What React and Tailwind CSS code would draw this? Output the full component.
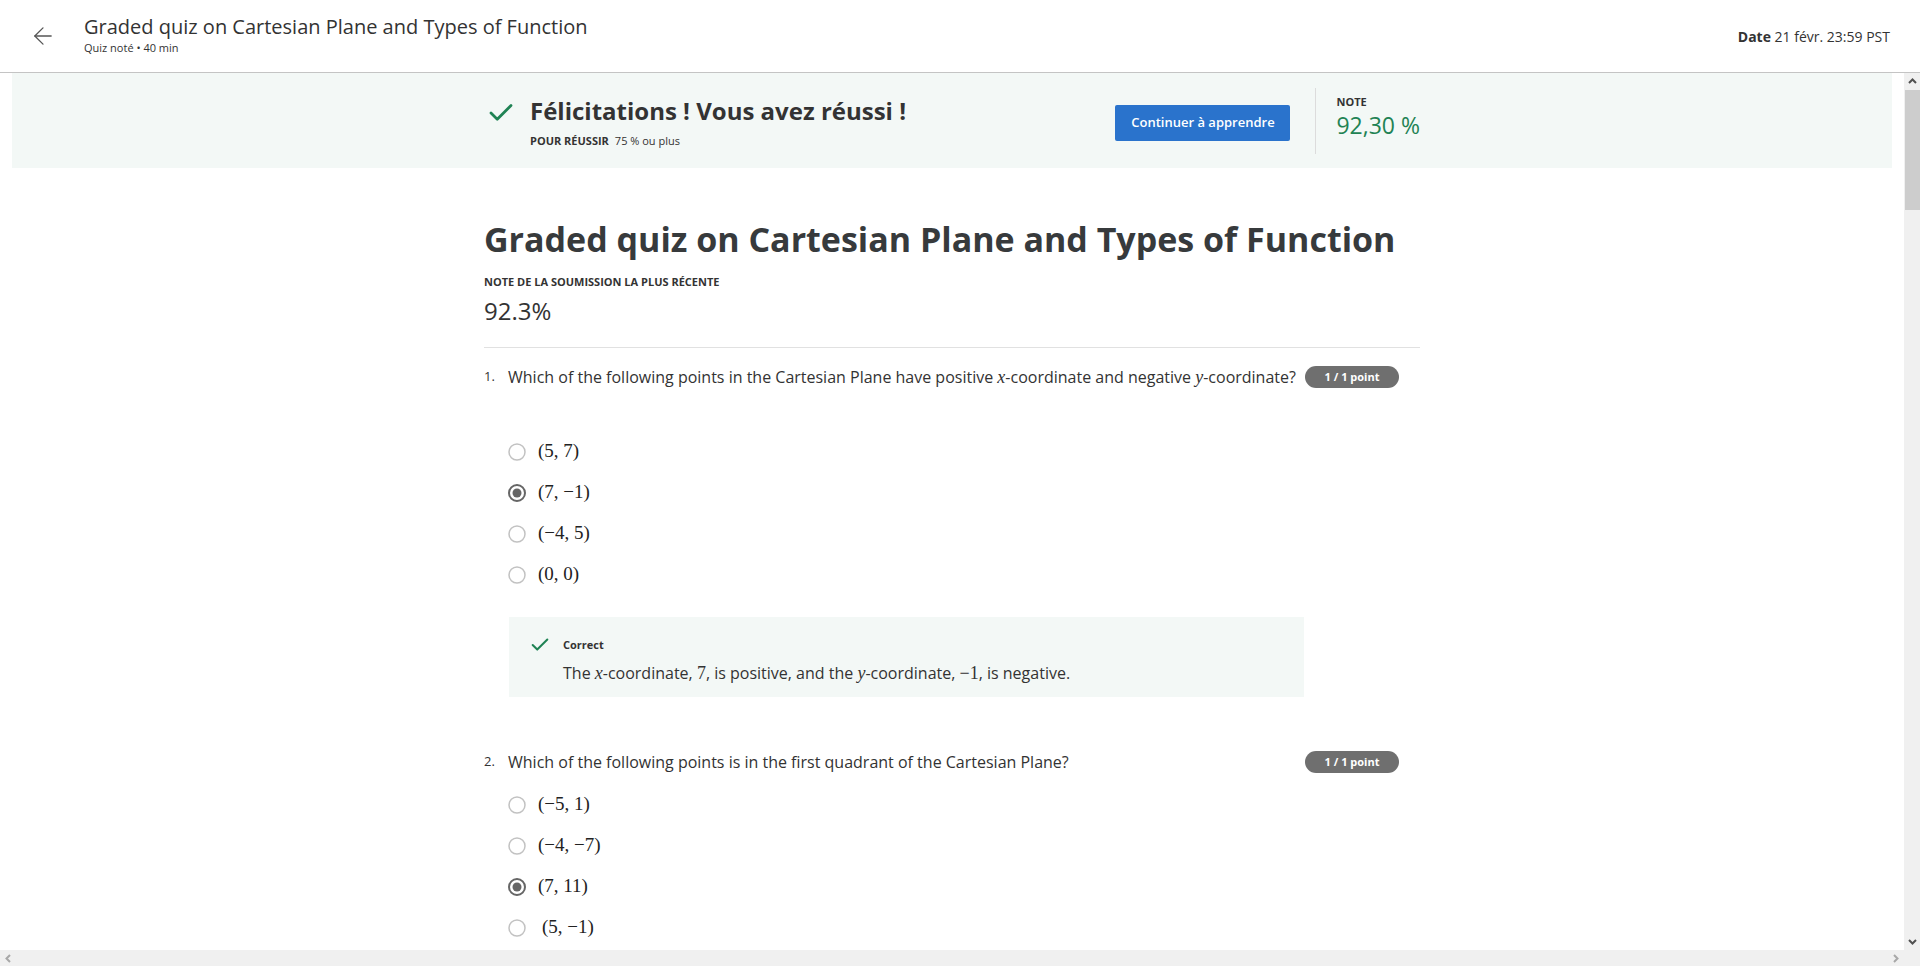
import { ArrowLeft, Check } from 'lucide-react';

const M = ({ children, italic }) => (
  <span className={`font-['Liberation_Serif',serif] text-[18px] ${italic ? 'italic' : ''}`}>{children}</span>
);

const Radio = ({ checked }) => (
  <svg width="18" height="18" viewBox="0 0 18 18" className="shrink-0">
    <circle cx="9" cy="9" r="8" fill="white" stroke={checked ? '#666666' : '#c2c2c2'} strokeWidth={checked ? 2 : 1.5} />
    {checked && <circle cx="9" cy="9" r="4.5" fill="#666666" />}
  </svg>
);

const Option = ({ label, checked, extra = '' }) => (
  <div className="flex items-center h-[41px]">
    <Radio checked={checked} />
    <span className={`ml-[12px] ${extra} font-['Liberation_Serif',serif] text-[19px] text-[#222]`}>{label}</span>
  </div>
);

const Badge = () => (
  <span className="shrink-0 w-[94px] h-[22px] rounded-full bg-[#6f6f6f] text-white text-[11px] font-bold flex items-center justify-center mr-[21px]">
    1 / 1 point
  </span>
);

const Chevron = ({ dir, color }) => {
  const pts = {
    up: '2,7 5.5,3.5 9,7',
    down: '2,4 5.5,7.5 9,4',
    left: '7,2 3.5,5.5 7,9',
    right: '4,2 7.5,5.5 4,9',
  }[dir];
  return (
    <svg width="11" height="11" viewBox="0 0 11 11">
      <polyline points={pts} fill="none" stroke={color} strokeWidth="2" />
    </svg>
  );
};

export default function App() {
  const q1 = [
    { label: '(5, 7)' },
    { label: '(7, −1)', checked: true },
    { label: '(−4, 5)' },
    { label: '(0, 0)' },
  ];
  const q2 = [
    { label: '(−5, 1)' },
    { label: '(−4, −7)' },
    { label: '(7, 11)', checked: true },
    { label: '(5, −1)', extra: 'pl-[4px]' },
  ];

  return (
    <div className="w-[1920px] h-[966px] flex flex-col overflow-hidden bg-white text-[#333] font-['Open_Sans',sans-serif]">
      {/* Header */}
      <header className="h-[73px] shrink-0 border-b border-[#c4c4c4] flex items-center pl-[29px] pr-[30px]">
        <ArrowLeft className="w-[28px] h-[28px] text-[#555]" strokeWidth={1.1} />
        <div className="ml-[27px] flex flex-col mb-[2px]">
          <h1 className="text-[20px] leading-[26px] text-[#333]">Graded quiz on Cartesian Plane and Types of Function</h1>
          <span className="text-[11px] leading-[16px] text-[#333]">Quiz noté • 40 min</span>
        </div>
        <div className="ml-auto text-[14px] text-[#333]">
          <span className="font-bold">Date</span> 21 févr. 23:59 PST
        </div>
      </header>

      <div className="flex-1 flex min-h-0">
        <div className="flex-1 flex flex-col min-w-0">
          <main className="flex-1 overflow-hidden px-[12px]">
            {/* Banner */}
            <section className="h-[95px] bg-[#f3f8f6]">
              <div className="w-[936px] mx-auto h-full flex justify-between">
                <div className="flex pt-[24px]">
                  <Check className="w-[30px] h-[30px] text-[#1f8354] mt-[1px] ml-[2px]" strokeWidth={2.2} />
                  <div className="ml-[14px]">
                    <h2 className="text-[24px] leading-[28px] font-bold text-[#333]">Félicitations ! Vous avez réussi !</h2>
                    <p className="mt-[8px] text-[11px] leading-[16px]">
                      <span className="font-bold mr-[6px]">POUR RÉUSSIR</span>75 % ou plus
                    </p>
                  </div>
                </div>
                <div className="flex items-center">
                  <button className="w-[175px] h-[36px] mt-[5px] bg-[#2a73cc] rounded-[2px] text-white text-[13px] font-semibold">
                    Continuer à apprendre
                  </button>
                  <div className="w-px h-[66px] bg-[#dcdcdc] ml-[25px]" />
                  <div className="ml-[20px] mb-[8px] whitespace-nowrap">
                    <div className="text-[11px] leading-[16px] font-bold">NOTE</div>
                    <div className="text-[23px] leading-[30px] text-[#1f8354]">92,30 %</div>
                  </div>
                </div>
              </div>
            </section>

            {/* Content */}
            <div className="w-[936px] mx-auto">
              <h1 className="mt-[51px] text-[34px] leading-[40px] font-bold text-[#373a3c]">
                Graded quiz on Cartesian Plane and Types of Function
              </h1>
              <div className="mt-[15px] text-[11px] leading-[16px] font-bold">NOTE DE LA SOUMISSION LA PLUS RÉCENTE</div>
              <div className="mt-[5px] text-[24px] leading-[32px]">92.3%</div>
              <div className="mt-[20px] h-px bg-[#e1e1e1]" />

              {/* Question 1 */}
              <div className="mt-[17px] flex items-center">
                <span className="w-[24px] text-[13px]">1.</span>
                <p className="flex-1 text-[16px] leading-[24px]">
                  Which of the following points in the Cartesian Plane have positive <M italic>x</M>-coordinate and negative{' '}
                  <M italic>y</M>-coordinate?
                </p>
                <Badge />
              </div>
              <div className="mt-[42px] ml-[24px]">
                {q1.map((o) => (
                  <Option key={o.label} {...o} />
                ))}
              </div>
              <div className="mt-[22px] ml-[25px] w-[795px] h-[80px] bg-[#f3f8f6] pl-[20px] pt-[17px]">
                <div className="flex items-center">
                  <Check className="w-[22px] h-[22px] text-[#1f8354]" strokeWidth={2.2} />
                  <span className="ml-[12px] text-[11px] leading-[16px] font-bold">Correct</span>
                </div>
                <p className="ml-[34px] mt-[5px] text-[16px] leading-[24px]">
                  The <M italic>x</M>-coordinate, <M>7</M>, is positive, and the <M italic>y</M>-coordinate, <M>−1</M>, is negative.
                </p>
              </div>

              {/* Question 2 */}
              <div className="mt-[53px] flex items-center">
                <span className="w-[24px] text-[13px]">2.</span>
                <p className="flex-1 text-[16px] leading-[24px]">
                  Which of the following points is in the first quadrant of the Cartesian Plane?
                </p>
                <Badge />
              </div>
              <div className="mt-[10px] ml-[24px]">
                {q2.map((o) => (
                  <Option key={o.label} {...o} />
                ))}
              </div>
            </div>
          </main>

          {/* Horizontal scrollbar */}
          <div className="h-[16px] shrink-0 bg-[#f0f0f0] flex items-center justify-between px-[3px]">
            <Chevron dir="left" color="#a8a8a8" />
            <Chevron dir="right" color="#a8a8a8" />
          </div>
        </div>

        {/* Vertical scrollbar */}
        <div className="w-[16px] shrink-0 bg-[#f0f0f0] flex flex-col items-center">
          <div className="h-[17px] flex items-center justify-center">
            <Chevron dir="up" color="#505050" />
          </div>
          <div className="w-[15px] h-[120px] bg-[#cdcdcd]" />
          <div className="flex-1" />
          <div className="h-[17px] flex items-center justify-center mb-[16px]">
            <Chevron dir="down" color="#505050" />
          </div>
        </div>
      </div>
    </div>
  );
}
